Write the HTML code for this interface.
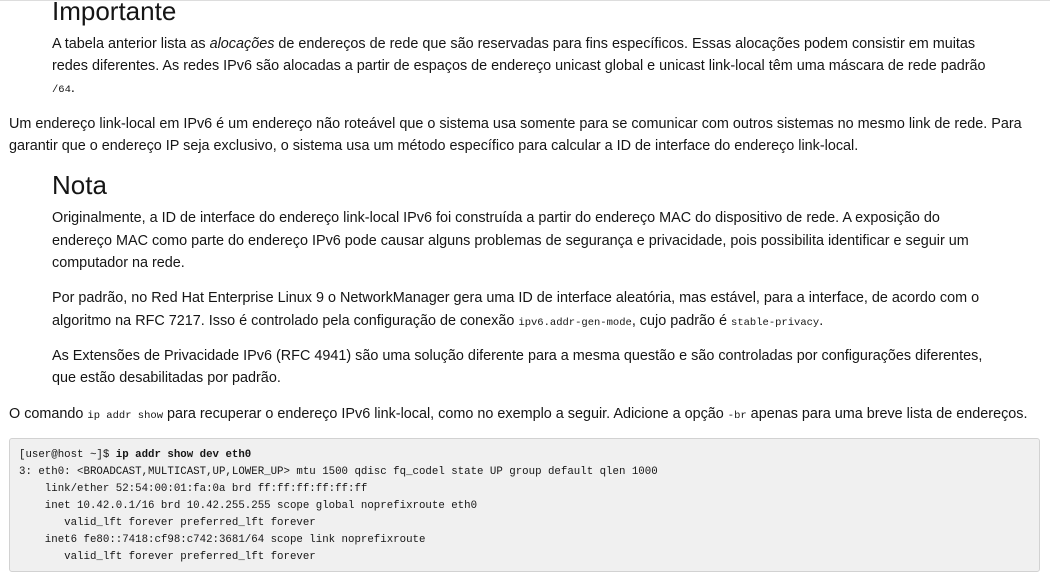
<!DOCTYPE html>
<html><head><meta charset="utf-8"><style>
body{margin:0;width:1050px;height:585px;overflow:hidden;background:#fff;font-family:"Liberation Sans",sans-serif;color:#151515;position:relative}
.l{position:absolute;white-space:nowrap;font-size:14.4px;line-height:20px;margin-top:1px}
.h{position:absolute;font-size:26px;line-height:30px;white-space:nowrap}
code{font-family:"Liberation Mono",monospace;font-size:10.5px}
.pre{position:absolute;left:9px;top:438px;width:1031px;height:134px;background:#f0f0f0;border:1px solid #d2d2d2;border-radius:3px;box-sizing:border-box}
.pre div{position:absolute;left:9px;font-family:"Liberation Mono",monospace;font-size:10.75px;line-height:17px;white-space:pre;color:#151515}
</style></head><body>
<div style="position:absolute;left:0;top:0;width:1050px;height:1px;background:#ddd"></div>
<div class="h" style="left:52px;top:-4px">Importante</div>
<div class="l" style="left:52px;top:33px">A tabela anterior lista as <i>alocações</i> de endereços de rede que são reservadas para fins específicos. Essas alocações podem consistir em muitas</div>
<div class="l" style="left:52px;top:55px">redes diferentes. As redes IPv6 são alocadas a partir de espaços de endereço unicast global e unicast link-local têm uma máscara de rede padrão</div>
<div class="l" style="left:52px;top:77px"><code>/64</code>.</div>
<div class="l" style="left:9px;top:113px">Um endereço link-local em IPv6 é um endereço não roteável que o sistema usa somente para se comunicar com outros sistemas no mesmo link de rede. Para</div>
<div class="l" style="left:9px;top:135px">garantir que o endereço IP seja exclusivo, o sistema usa um método específico para calcular a ID de interface do endereço link-local.</div>
<div class="h" style="left:52px;top:170px">Nota</div>
<div class="l" style="left:52px;top:207px">Originalmente, a ID de interface do endereço link-local IPv6 foi construída a partir do endereço MAC do dispositivo de rede. A exposição do</div>
<div class="l" style="left:52px;top:230px">endereço MAC como parte do endereço IPv6 pode causar alguns problemas de segurança e privacidade, pois possibilita identificar e seguir um</div>
<div class="l" style="left:52px;top:252px">computador na rede.</div>
<div class="l" style="left:52px;top:287px">Por padrão, no Red Hat Enterprise Linux 9 o NetworkManager gera uma ID de interface aleatória, mas estável, para a interface, de acordo com o</div>
<div class="l" style="left:52px;top:310px">algoritmo na RFC 7217. Isso é controlado pela configuração de conexão <code>ipv6.addr-gen-mode</code>, cujo padrão é <code>stable-privacy</code>.</div>
<div class="l" style="left:52px;top:345px">As Extensões de Privacidade IPv6 (RFC 4941) são uma solução diferente para a mesma questão e são controladas por configurações diferentes,</div>
<div class="l" style="left:52px;top:367px">que estão desabilitadas por padrão.</div>
<div class="l" style="left:9px;top:403px">O comando <code>ip addr show</code> para recuperar o endereço IPv6 link-local, como no exemplo a seguir. Adicione a opção <code>-br</code> apenas para uma breve lista de endereços.</div>
<div class="pre">
<div style="top:8px">[user@host ~]$ <b>ip addr show dev eth0</b></div>
<div style="top:25px">3: eth0: &lt;BROADCAST,MULTICAST,UP,LOWER_UP&gt; mtu 1500 qdisc fq_codel state UP group default qlen 1000</div>
<div style="top:42px">    link/ether 52:54:00:01:fa:0a brd ff:ff:ff:ff:ff:ff</div>
<div style="top:59px">    inet 10.42.0.1/16 brd 10.42.255.255 scope global noprefixroute eth0</div>
<div style="top:76px">       valid_lft forever preferred_lft forever</div>
<div style="top:93px">    inet6 fe80::7418:cf98:c742:3681/64 scope link noprefixroute</div>
<div style="top:110px">       valid_lft forever preferred_lft forever</div>
</div>
</body></html>
